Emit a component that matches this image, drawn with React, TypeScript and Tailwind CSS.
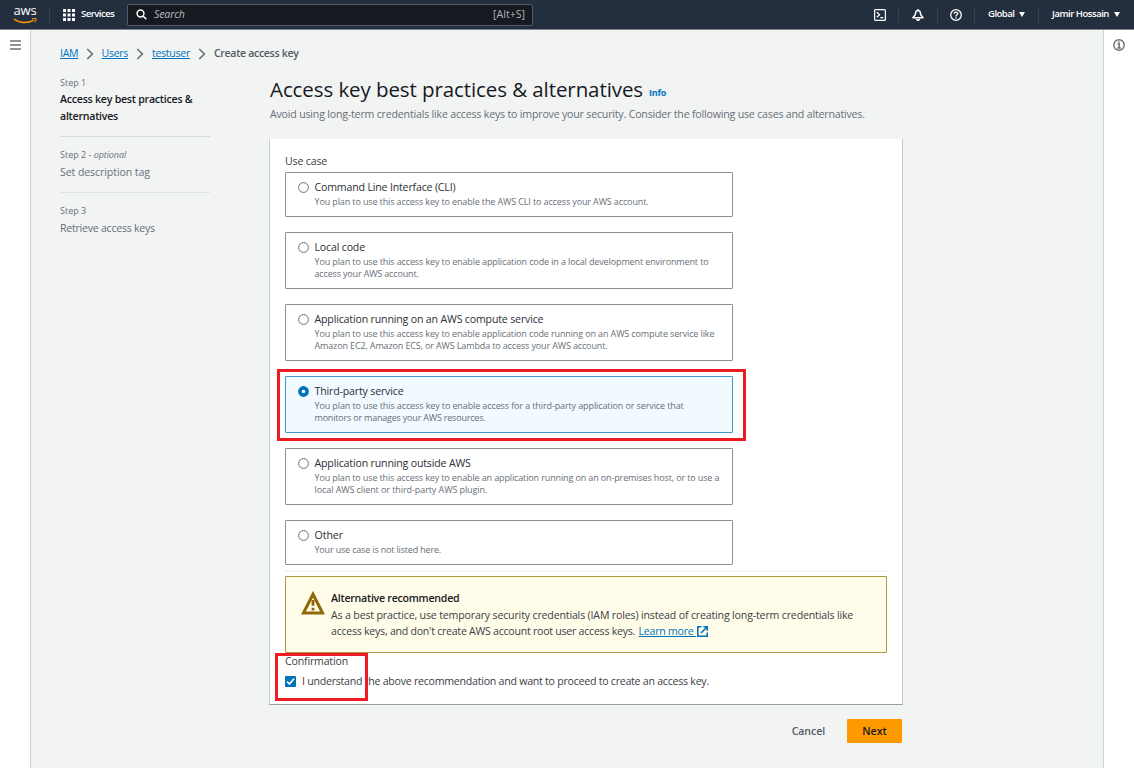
import type { ReactNode } from "react";

type UseCase = {
  title: string;
  titleClass: string;
  lines: { text: string; className: string }[];
  selected?: boolean;
};

const useCases: UseCase[] = [
  {
    title: "Command Line Interface (CLI)",
    titleClass: "tracking-[-0.175px]",
    lines: [
      { text: "You plan to use this access key to enable the AWS CLI to access your AWS account.", className: "tracking-[-0.126px]" },
    ],
  },
  {
    title: "Local code",
    titleClass: "tracking-[-0.175px]",
    lines: [
      { text: "You plan to use this access key to enable application code in a local development environment to", className: "tracking-[-0.122px]" },
      { text: "access your AWS account.", className: "tracking-[-0.16px]" },
    ],
  },
  {
    title: "Application running on an AWS compute service",
    titleClass: "tracking-[-0.166px]",
    lines: [
      { text: "You plan to use this access key to enable application code running on an AWS compute service like", className: "tracking-[-0.126px]" },
      { text: "Amazon EC2, Amazon ECS, or AWS Lambda to access your AWS account.", className: "tracking-[-0.136px]" },
    ],
  },
  {
    title: "Third-party service",
    titleClass: "tracking-[-0.166px]",
    selected: true,
    lines: [
      { text: "You plan to use this access key to enable access for a third-party application or service that", className: "tracking-[-0.114px]" },
      { text: "monitors or manages your AWS resources.", className: "tracking-[-0.2px]" },
    ],
  },
  {
    title: "Application running outside AWS",
    titleClass: "tracking-[-0.166px]",
    lines: [
      { text: "You plan to use this access key to enable an application running on an on-premises host, or to use a", className: "tracking-[-0.13px]" },
      { text: "local AWS client or third-party AWS plugin.", className: "tracking-[-0.08px]" },
    ],
  },
  {
    title: "Other",
    titleClass: "tracking-[-0.05px]",
    lines: [{ text: "Your use case is not listed here.", className: "tracking-[-0.17px]" }],
  },
];

function AwsLogo() {
  return (
    <div className="ml-[13px] flex w-6 flex-col items-center">
      <span className="h-[11px] text-[13px] leading-[10px] tracking-[-0.2px] text-white">aws</span>
      <svg width="24" height="6" viewBox="0 0 24 6" fill="none" className="mt-[2px]">
        <path d="M1 1C6 5.2 14.5 5.6 20.5 2.4" stroke="#ff9900" strokeWidth="1.5" />
        <path d="M19 .9C21 .4 22.8.5 23 1C23.2 1.5 22.7 3 21.7 4.1" stroke="#ff9900" strokeWidth="1.1" />
      </svg>
    </div>
  );
}

function Divider({ className }: { className: string }) {
  return <div className={`h-4 w-px bg-[#37424f] ${className}`} />;
}

function Caret() {
  return (
    <svg width="6" height="5" viewBox="0 0 6 5">
      <path d="M0 0H6L3 5Z" fill="#fff" />
    </svg>
  );
}

function TopBar() {
  return (
    <header className="flex h-[30px] items-center border-b border-[#7d858e] bg-[#232f3e] text-white">
      <AwsLogo />
      <Divider className="ml-[12px]" />
      <svg width="12" height="12" viewBox="0 0 12 12" fill="#fff" className="ml-[13px]">
        {[0, 4.5, 9].flatMap((y) => [0, 4.5, 9].map((x) => <rect key={`${x}-${y}`} x={x} y={y} width="3" height="3" />))}
      </svg>
      <span className="ml-[6px] w-[46px] text-[9.5px] font-semibold tracking-[-0.5px] whitespace-nowrap">Services</span>
      <div className="flex h-[22px] w-[406px] items-center rounded-[2px] border border-[#545b64] bg-[#16191f] pr-[7px] pl-[8px]">
        <svg width="11" height="11" viewBox="0 0 11 11" fill="none" stroke="#fff" strokeWidth="1.5">
          <circle cx="4.5" cy="4.5" r="3.4" />
          <path d="M7 7L10.3 10.3" />
        </svg>
        <span className="ml-[7px] text-[10.6px] tracking-[-0.15px] text-[#b4bcbf] italic">Search</span>
        <span className="ml-auto text-[10.6px] text-[#aab7b8]">[Alt+S]</span>
      </div>
      <div className="ml-auto flex items-center">
        <svg width="12" height="12" viewBox="0 0 12 12" fill="none" stroke="#fff">
          <rect x="0.6" y="0.6" width="10.8" height="10.8" rx="1" strokeWidth="1.2" />
          <path d="M2.8 3.2L5.6 5.7L2.8 8.2M6.3 8.7H9.3" strokeWidth="1.2" />
        </svg>
        <Divider className="ml-3" />
        <svg width="12" height="12" viewBox="0 0 12 12" fill="none" stroke="#fff" strokeWidth="1.5" strokeLinejoin="round" className="ml-[13px]">
          <path d="M6 0V1.6M6 1.6C4.3 1.6 3.6 2.8 3.5 4.6C3.4 6.5 1.8 7.2 0.9 8.8H11.1C10.2 7.2 8.6 6.5 8.5 4.6C8.4 2.8 7.7 1.6 6 1.6Z" />
          <path d="M4.4 9.8C4.6 11.8 7.4 11.8 7.6 9.8" />
        </svg>
        <Divider className="ml-[13px]" />
        <svg width="12" height="12" viewBox="0 0 12 12" fill="none" stroke="#fff" strokeWidth="1.3" className="ml-3">
          <circle cx="6" cy="6" r="5.3" />
          <path d="M4.2 4.7C4.2 2.5 7.8 2.5 7.8 4.6C7.8 5.9 6 5.8 6 7.4M6 8.2V9.4" />
        </svg>
        <Divider className="ml-3" />
        <span className="ml-[13px] w-[31px] text-[9.5px] font-semibold tracking-[-0.5px] whitespace-nowrap">Global</span>
        <Caret />
        <Divider className="ml-[13px]" />
        <span className="ml-[13px] w-[62px] text-[9.5px] font-semibold tracking-[-0.47px] whitespace-nowrap">Jamir Hossain</span>
        <Caret />
        <div className="w-[14px]" />
      </div>
    </header>
  );
}

function Chevron() {
  return (
    <svg width="8" height="12" viewBox="0 0 8 12" fill="none" className="mr-[8px] ml-[7.5px]">
      <path d="M1.2 1L6.4 6L1.2 11" stroke="#687078" strokeWidth="1.6" />
    </svg>
  );
}

function Crumb({ children, className }: { children: ReactNode; className: string }) {
  return (
    <a className={`tracking-[-0.3px] whitespace-nowrap text-[#0073bb] underline underline-offset-1 ${className}`}>{children}</a>
  );
}

function Steps() {
  return (
    <nav className="w-[150px] pt-[9px] text-[10.6px] tracking-[-0.25px] text-[#687078]">
      <div className="h-[62px] border-b border-[#d5dbdb]">
        <div className="text-[9px] leading-[16px] tracking-normal">Step 1</div>
        <div className="leading-[17px] font-semibold tracking-[-0.24px] whitespace-nowrap text-[#16191f]">
          Access key best practices &amp;
          <br />
          alternatives
        </div>
      </div>
      <div className="h-14 border-b border-[#dfe3e3] pt-[10px]">
        <div className="text-[9px] leading-[16px] tracking-normal">
          Step 2 - <i className="tracking-[-0.1px]">optional</i>
        </div>
        <div className="leading-[18px] tracking-[-0.1px]">Set description tag</div>
      </div>
      <div className="pt-[10px]">
        <div className="text-[9px] leading-[16px] tracking-normal">Step 3</div>
        <div className="leading-[18px]">Retrieve access keys</div>
      </div>
    </nav>
  );
}

function RadioTile({ item }: { item: UseCase }) {
  const tone = item.selected ? "border-[#4297cc] bg-[#f1faff]" : "border-[#8b9198] bg-white";
  return (
    <label className={`flex w-[448px] rounded-[1px] border pt-[6px] pb-[8px] pl-[11.5px] ${tone}`}>
      <svg width="11" height="11" viewBox="0 0 11 11" className="mt-[3px] mr-[6px] shrink-0">
        {item.selected ? (
          <circle cx="5.5" cy="5.5" r="3.6" fill="#fff" stroke="#0073bb" strokeWidth="3.6" />
        ) : (
          <circle cx="5.5" cy="5.5" r="4.9" fill="#fff" stroke="#687078" />
        )}
      </svg>
      <div className="whitespace-nowrap">
        <div className={`text-[10.6px] leading-[17px] text-[#2b2f36] ${item.titleClass}`}>{item.title}</div>
        <div className="text-[9px] leading-[12px] text-[#687078]">
          {item.lines.map((line) => (
            <div key={line.text} className={line.className}>
              {line.text}
            </div>
          ))}
        </div>
      </div>
    </label>
  );
}

function Warning() {
  return (
    <div className="mt-[4px] flex h-[77px] rounded-[1px] border border-[#b39440] bg-[#fffce9] pt-[13px] pl-[15px]">
      <svg width="24" height="24" viewBox="0 0 24 24" fill="none" className="mt-[1px] mr-[6px] shrink-0">
        <path d="M12 3.2L21.6 22H2.4Z" stroke="#906806" strokeWidth="3" />
        <path d="M12 9V14.8M12 16.8V19.4" stroke="#906806" strokeWidth="2.8" />
      </svg>
      <div className="text-[10.6px] leading-[16px] whitespace-nowrap text-[#3c4047]">
        <div className="font-semibold tracking-[-0.25px] text-[#16191f]">Alternative recommended</div>
        <div className="mt-px tracking-[-0.164px]">
          As a best practice, use temporary security credentials (IAM roles) instead of creating long-term credentials like
        </div>
        <div className="flex items-center tracking-[-0.255px]">
          access keys, and don't create AWS account root user access keys.
          <a className="ml-[3.5px] tracking-[-0.25px] text-[#0073bb] underline underline-offset-1">Learn more&nbsp;</a>
          <svg width="11" height="11" viewBox="0 0 11 11" fill="none" stroke="#0073bb" strokeWidth="1.6" className="ml-px">
            <path d="M4.5 0.8H0.8V10.2H10.2V6.5M6.3 0.8H10.2V4.7M10 1L4 7" />
          </svg>
        </div>
      </div>
    </div>
  );
}

export default function App() {
  return (
    <div className="relative flex h-[768px] w-[1134px] flex-col overflow-hidden bg-[#f2f3f3] font-['Open_Sans','Noto_Sans',sans-serif]">
      <TopBar />
      <div className="flex min-h-0 flex-1">
        <aside className="w-[31px] border-r border-[#cdd2d2] bg-white pt-[10px] pl-[9.5px]">
          <svg width="11" height="10" viewBox="0 0 11 10" stroke="#687078" strokeWidth="1.5">
            <path d="M0 1H11M0 5H11M0 9H11" />
          </svg>
        </aside>
        <div className="flex-1 pl-[29px]">
          <div className="flex h-9 items-center pt-[11px] text-[10.6px]">
            <Crumb className="w-[18px]">IAM</Crumb>
            <Chevron />
            <Crumb className="w-[27px]">Users</Crumb>
            <Chevron />
            <Crumb className="w-[38px]">testuser</Crumb>
            <Chevron />
            <span className="ml-[0.5px] font-semibold tracking-[-0.34px] text-[#545b64]">Create access key</span>
          </div>
          <div className="flex gap-[59px]">
            <Steps />
            <main className="w-[634px] pt-[6px]">
              <div className="ml-px flex h-[34px] items-center text-[#16191f]">
                <h1 className="w-[379px] text-[20.5px] tracking-[-0.083px] whitespace-nowrap">Access key best practices &amp; alternatives</h1>
                <a className="mt-[8px] text-[9px] font-bold tracking-[-0.2px] text-[#0073bb]">Info</a>
              </div>
              <p className="ml-px h-[33px] text-[10.6px] leading-[17px] tracking-[-0.186px] whitespace-nowrap text-[#687078]">
                Avoid using long-term credentials like access keys to improve your security. Consider the following use cases and alternatives.
              </p>
              <section className="h-[566px] border border-t-0 border-[#c5cccd] border-b-[#95a0a4] bg-white px-[15px] pt-[14px]">
                <div className="h-[19px] text-[10.6px] leading-[17px] tracking-[-0.17px] text-[#3c4047]">Use case</div>
                <div className="flex flex-col gap-[15px]">
                  {useCases.map((item) => (
                    <RadioTile key={item.title} item={item} />
                  ))}
                </div>
                <div className="mt-[5px] h-[2px] bg-[#f4f5f5]" />
                <Warning />
                <div className="text-[10.6px] leading-[17px] tracking-[-0.18px] text-[#3c4047]">Confirmation</div>
                <label className="mt-[2px] flex items-center text-[10.6px] leading-[18px] tracking-[-0.245px] whitespace-nowrap text-[#3c4047]">
                  <svg width="11" height="11" viewBox="0 0 11 11" className="mr-[6px]">
                    <rect width="11" height="11" rx="1" fill="#0073bb" />
                    <path d="M2 5.5L4.5 8L9 2.8" fill="none" stroke="#fff" strokeWidth="1.7" />
                  </svg>
                  I understand the above recommendation and want to proceed to create an access key.
                </label>
              </section>
              <div className="flex items-center justify-end pt-[14px] pr-px text-[10.6px] font-semibold">
                <button className="mt-px mr-[22px] tracking-[-0.1px] text-[#545b64]">Cancel</button>
                <button className="h-6 w-[55px] rounded-[1px] bg-[#ff9900] pt-px text-[#16191f]">Next</button>
              </div>
            </main>
          </div>
        </div>
        <aside className="w-[31px] border-l border-[#cdd2d2] bg-white pt-[9px] pl-[9px]">
          <svg width="12" height="12" viewBox="0 0 12 12" fill="none" stroke="#687078">
            <circle cx="6" cy="6" r="5.2" strokeWidth="1.4" />
            <path d="M6 2.4V4.2M4.6 5.2H6.2V8.8M4.3 8.9H7.8" strokeWidth="1.5" />
          </svg>
        </aside>
      </div>
      <div className="absolute top-[369px] left-[277px] h-[72px] w-[469px] border-[3px] border-[#ed1c24]" />
      <div className="absolute top-[653px] left-[275px] h-12 w-[93px] border-[3px] border-[#ed1c24]" />
    </div>
  );
}
